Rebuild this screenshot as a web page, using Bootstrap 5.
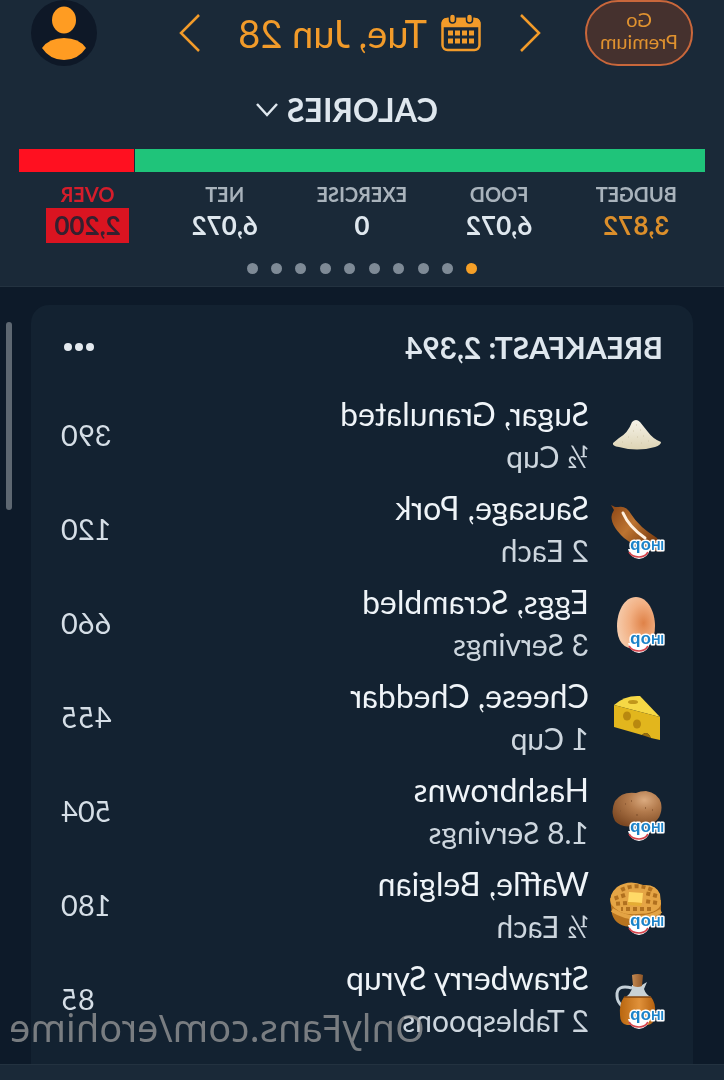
<!DOCTYPE html>
<html lang="en">
<head>
<meta charset="utf-8">
<meta name="viewport" content="width=device-width, initial-scale=1">
<title>Calories</title>
<link href="https://cdn.jsdelivr.net/npm/bootstrap@5.3.0/dist/css/bootstrap.min.css" rel="stylesheet">
<style>
  body { background: #0d1a29; color: #dfe7ee; font-family: Lato, "Noto Sans", sans-serif; }
  .screen { transform: scaleX(-1); }
  .topbar, .tabs { background: #1a2938; }
  .topbar { border-bottom: 1px solid #233240; padding-bottom: 12px; }
  .amber { color: #f29b2a; }
  .stats .amber { color: #dc8f2b; }
  .header-row { padding: 0 31px; height: 66px; }
  .plain { background: none; border: 0; padding: 0; color: inherit; line-height: 1; display: flex; align-items: center; }
  .premium { width: 108px; height: 66px; border: 2px solid #c9673b; border-radius: 33px; background: #45312e; color: #e0922f; font-size: 20px; line-height: 22px; padding: 0 0 6px; }
  .day-picker { margin-left: 44px; }
  .date { font-size: 38px; gap: 14px; padding: 0 37px 0 38px; }
  .title { font-size: 32px; font-weight: 700; gap: 9px; height: 40px; margin-top: 24px; padding-left: 30px; }
  .meter { margin: 19px 19px 0; gap: 1px; height: 23px; }
  .meter-ok { background: #1fc47a; }
  .meter-over { background: #ff1020; }
  .stats { margin: 10px 19px 0; text-align: center; }
  .stat-name { font-size: 20px; line-height: 24px; font-weight: 700; color: #a9b3bc; }
  .stat-value { font-size: 26px; line-height: 35px; font-weight: 700; display: inline-block; margin-top: 2px; }
  .over .stat-name { color: #d51d2b; }
  .over .stat-value { background: #da1421; color: #35202f; padding: 0 8px; }
  .dots { width: 231px; margin: 20px auto 0; }
  .dots span { width: 11px; height: 11px; border-radius: 50%; background: #7e8a96; }
  .dots .on { background: #f59f27; }
  .meal { margin: 18px 31px 0; padding: 0 30px; background: #132231; border-radius: 18px 18px 0 0; }
  .meal-head { height: 83px; }
  .meal-title { font-size: 30px; font-weight: 700; line-height: 40px; }
  .food { height: 94px; }
  .food svg { width: 54px; height: 54px; margin-left: -2px; margin-right: 22px; overflow: visible; flex: none; }
  .food-name { font-size: 32px; line-height: 42px; color: #eff4f8; }
  .food-size { font-size: 30px; line-height: 42px; color: #cdd6de; }
  .kcal { font-size: 29px; color: #d5dee6; }
  .thumb { right: 6px; top: 35px; width: 6px; height: 188px; border-radius: 3px; background: #5d6771; }
  .stamp { right: 9px; bottom: 10px; font: 38px/54px "Noto Sans", sans-serif; color: #a1a1a1b8; white-space: nowrap; }
  .tabs { height: 16px; border-top: 1px solid #233240; }
  .logo { font: 700 13px "Liberation Sans", sans-serif; fill: #1c83c9; stroke: #fff; stroke-width: 3px; paint-order: stroke; stroke-linejoin: round; }
  .logo tspan { font-size: 17px; }
</style>
</head>
<body>
<svg width="0" height="0" class="position-absolute" aria-hidden="true">
  <defs>
    <linearGradient id="gSugar" x1="0" y1="0" x2="0" y2="1"><stop offset="0" stop-color="#f6f3e9"/><stop offset="1" stop-color="#ddd4b4"/></linearGradient>
    <linearGradient id="gSausage" x1="1" y1="0" x2="0" y2=".8"><stop offset="0" stop-color="#8a4515"/><stop offset=".45" stop-color="#bd7431"/><stop offset="1" stop-color="#6f3209"/></linearGradient>
    <radialGradient id="gEgg" cx=".3" cy=".5" r=".75"><stop offset="0" stop-color="#df8248"/><stop offset=".5" stop-color="#f2b083"/><stop offset="1" stop-color="#f6cfb1"/></radialGradient>
    <radialGradient id="gPotato" cx=".35" cy=".25" r=".8"><stop offset="0" stop-color="#dbab80"/><stop offset=".4" stop-color="#b37b4d"/><stop offset="1" stop-color="#7c4822"/></radialGradient>
    <linearGradient id="gSyrup"><stop offset="0" stop-color="#b4600e"/><stop offset=".45" stop-color="#e0913a"/><stop offset="1" stop-color="#b9660f"/></linearGradient>
    <linearGradient id="gCork"><stop offset="0" stop-color="#8d5527"/><stop offset="1" stop-color="#c58a52"/></linearGradient>
    <g id="brand">
      <path d="M15 47 Q17 56 26 57 Q35 56 37 47Z" fill="#fff"/>
      <path d="M17 50 Q20 55 26 55 Q33 55 36 50" fill="none" stroke="#d5444c" stroke-width="1.600"/>
    </g>
  </defs>
</svg>

<div class="screen position-relative vh-100 d-flex flex-column overflow-hidden">
  <header class="topbar flex-shrink-0">
    <div class="header-row d-flex align-items-center">
      <button class="premium" type="button">Go<br>Premium</button>
      <div class="day-picker d-flex align-items-center amber">
        <button class="plain" type="button" aria-label="Previous day"><svg width="22" height="40" viewBox="0 0 22 40" fill="none" stroke="currentColor" stroke-width="2.500"><path d="M20 2 2 20 20 38"/></svg></button>
        <button class="plain date" type="button">
          <svg width="40" height="38" viewBox="0 0 40 38" fill="none" stroke="currentColor" stroke-width="2.500"><rect x="1.500" y="5" width="37" height="31" rx="5"/><path d="M2 9Q2 5 7 5H33Q38 5 38 9V12H2Z" fill="currentColor"/><g fill="currentColor" stroke="#1a2938" stroke-width="1.500"><rect x="8.500" y="0" width="6" height="9" rx="3"/><rect x="25.500" y="0" width="6" height="9" rx="3"/></g><path d="M7 19H33M7 27H33" stroke-width="5" stroke-dasharray="5 2"/></svg>
          <span>Tue, Jun 28</span>
        </button>
        <button class="plain" type="button" aria-label="Next day"><svg width="22" height="40" viewBox="0 0 22 40" fill="none" stroke="currentColor" stroke-width="2.500"><path d="M2 2 20 20 2 38"/></svg></button>
      </div>
      <button class="plain ms-auto" type="button" aria-label="Profile"><svg width="66" height="66" viewBox="0 0 66 66"><circle cx="33" cy="33" r="33" fill="#0e1827"/><ellipse cx="33" cy="20" rx="12" ry="13.500" fill="#ff9c22"/><path d="M11 48Q18 38 33 38T55 48Q47 60 33 60T11 48Z" fill="#ff9c22"/></svg></button>
    </div>
    <button class="plain title mx-auto" type="button">CALORIES
      <svg width="22" height="14" viewBox="0 0 22 14" fill="none" stroke="currentColor" stroke-width="2.500"><path d="M1 1 11 12 21 1"/></svg>
    </button>
    <div class="meter d-flex"><div class="meter-ok" style="width:83.100%"></div><div class="meter-over flex-grow-1"></div></div>
    <div class="stats row g-0">
      <div class="col"><div class="stat-name">BUDGET</div><div class="stat-value amber">3,872</div></div>
      <div class="col"><div class="stat-name">FOOD</div><div class="stat-value">6,072</div></div>
      <div class="col"><div class="stat-name">EXERCISE</div><div class="stat-value">0</div></div>
      <div class="col"><div class="stat-name">NET</div><div class="stat-value">6,072</div></div>
      <div class="col over"><div class="stat-name">OVER</div><div class="stat-value">2,200</div></div>
    </div>
    <div class="dots d-flex justify-content-between"><span class="on"></span><span></span><span></span><span></span><span></span><span></span><span></span><span></span><span></span><span></span></div>
  </header>

  <main class="position-relative flex-grow-1 d-flex flex-column overflow-hidden">
    <section class="meal flex-grow-1">
      <div class="d-flex align-items-center justify-content-between meal-head">
        <h1 class="m-0 meal-title">BREAKFAST: 2,394</h1>
        <button class="plain" type="button" aria-label="More"><svg width="34" height="10" viewBox="0 0 34 10" fill="#e3e9ee"><circle cx="5" cy="5" r="4"/><circle cx="16" cy="5" r="4"/><circle cx="27" cy="5" r="4"/></svg></button>
      </div>
      <ul class="list-unstyled m-0">
        <li class="food d-flex align-items-center">
          <svg viewBox="0 0 54 54"><path d="M4 34Q12 31 17 24L25 14Q29 10 33 14Q37 25 46 30L52 35Q53 38 46 39Q28 44 10 39Q4 37 4 34Z" fill="url(#gSugar)"/><path d="M28 17h1M24 22h1M31 23h1M21 28h1M27 29h1M36 29h1M16 33h1M23 35h1M33 35h1M42 34h1" stroke="#cfc6a8"/></svg>
          <div class="flex-grow-1"><div class="food-name">Sugar, Granulated</div><div class="food-size">½ Cup</div></div><div class="kcal">390</div>
        </li>
        <li class="food d-flex align-items-center">
          <svg viewBox="0 0 54 54"><path d="M54 3 50 5 47 5Q39 3 34 12Q26 25 8 36L5 43 4 50 9 49Q25 49 41 36Q56 22 53 12L51 8Z" fill="url(#gSausage)"/><path d="M42 11Q36 25 20 36" fill="none" stroke="#fff0df" stroke-width="3" stroke-linecap="round"/><use href="#brand"/><text x="1" y="48" class="logo">IH<tspan>op</tspan></text></svg>
          <div class="flex-grow-1"><div class="food-name">Sausage, Pork</div><div class="food-size">2 Each</div></div><div class="kcal">120</div>
        </li>
        <li class="food d-flex align-items-center">
          <svg viewBox="0 0 54 54"><path d="M29 1C41 1 48 16 48 30Q48 53 29 53T10 30C10 16 17 1 29 1Z" fill="url(#gEgg)"/><use href="#brand"/><text x="1" y="48" class="logo">IH<tspan>op</tspan></text></svg>
          <div class="flex-grow-1"><div class="food-name">Eggs, Scrambled</div><div class="food-size">3 Servings</div></div><div class="kcal">660</div>
        </li>
        <li class="food d-flex align-items-center">
          <svg viewBox="0 0 54 54"><path d="M5 27 25 6Q40 5 51 15Z" fill="#f6d845"/><path d="M5 27 51 15V37L23 45Q18 40 14 48L5 50Z" fill="#e2b61d"/><ellipse cx="32" cy="12" rx="5" ry="2" fill="#c1971b"/><g fill="#b8880f"><ellipse cx="38" cy="26" rx="4" ry="4.500"/><ellipse cx="28" cy="34" rx="4" ry="4.500"/></g><path d="M14 48Q18 40 23 45Z" fill="#9b6e0b"/></svg>
          <div class="flex-grow-1"><div class="food-name">Cheese, Cheddar</div><div class="food-size">1 Cup</div></div><div class="kcal">455</div>
        </li>
        <li class="food d-flex align-items-center">
          <svg viewBox="0 0 54 54"><path d="M4 19Q7 9 19 7Q25 7 29 9Q43 7 50 17Q55 28 50 37Q44 44 32 42Q17 46 8 36Q2 29 4 19Z" fill="url(#gPotato)"/><path d="M27 31h2M12 26h1M39 20h1M44 27h1M33 17h1M19 24h1" stroke="#8a5a35" stroke-width="1.500"/><use href="#brand"/><text x="1" y="48" class="logo">IH<tspan>op</tspan></text></svg>
          <div class="flex-grow-1"><div class="food-name">Hashbrowns</div><div class="food-size">1.8 Servings</div></div><div class="kcal">504</div>
        </li>
        <li class="food d-flex align-items-center">
          <svg viewBox="0 0 54 54"><path d="M4 22V36Q8 46 29 49Q49 50 53 36L55 20Z" fill="#b8741f"/><path d="M4 33Q28 47 53 32" fill="none" stroke="#e3a344" stroke-width="4"/><path d="M5 16Q9 6 22 7Q36 1 48 9Q57 17 54 26Q46 38 28 36Q7 36 4 26Z" fill="#e5a545"/><g fill="none" stroke="#b0701f" stroke-width="4" stroke-dasharray="4 3"><path d="M13 12Q29 4 46 13"/><path d="M8 18 20 15M40 17 52 21"/><path d="M8 25 20 23M38 25 51 26"/><path d="M14 31 44 31"/></g><path d="M22 15 36 14 37 24 23 25Z" fill="#ffd967"/><path d="M23 25 37 24V27L24 28Z" fill="#e5ad34"/><use href="#brand"/><text x="1" y="48" class="logo">IH<tspan>op</tspan></text></svg>
          <div class="flex-grow-1"><div class="food-name">Waffle, Belgian</div><div class="food-size">½ Each</div></div><div class="kcal">180</div>
        </li>
        <li class="food d-flex align-items-center">
          <svg viewBox="0 0 54 54"><path d="M33 16Q49 12 48 24Q48 30 42 35" fill="none" stroke="#c4d0d8" stroke-width="3"/><path d="M18 10 23 13H33V17Q35 22 39 25H14Q19 23 21 17Z" fill="#c9d2d6"/><path d="M14 25H41Q46 32 45 43Q45 52 38 53H17Q10 52 10 41Q9 31 14 25Z" fill="url(#gSyrup)"/><path d="M14 25H41" stroke="#83460f" stroke-width="1.500"/><path d="M22 3Q27 1 33 3L32 14Q27 16 23 14Z" fill="url(#gCork)"/><use href="#brand"/><text x="1" y="48" class="logo">IH<tspan>op</tspan></text></svg>
          <div class="flex-grow-1"><div class="food-name">Strawberry Syrup</div><div class="food-size">2 Tablespoons</div></div><div class="kcal">85</div>
        </li>
      </ul>
    </section>
    <div class="thumb position-absolute"></div>
    <div class="stamp position-absolute">OnlyFans.com/erohime</div>
  </main>
  <footer class="tabs flex-shrink-0"></footer>
</div>
<script src="https://cdn.jsdelivr.net/npm/bootstrap@5.3.0/dist/js/bootstrap.bundle.min.js"></script>
</body>
</html>
